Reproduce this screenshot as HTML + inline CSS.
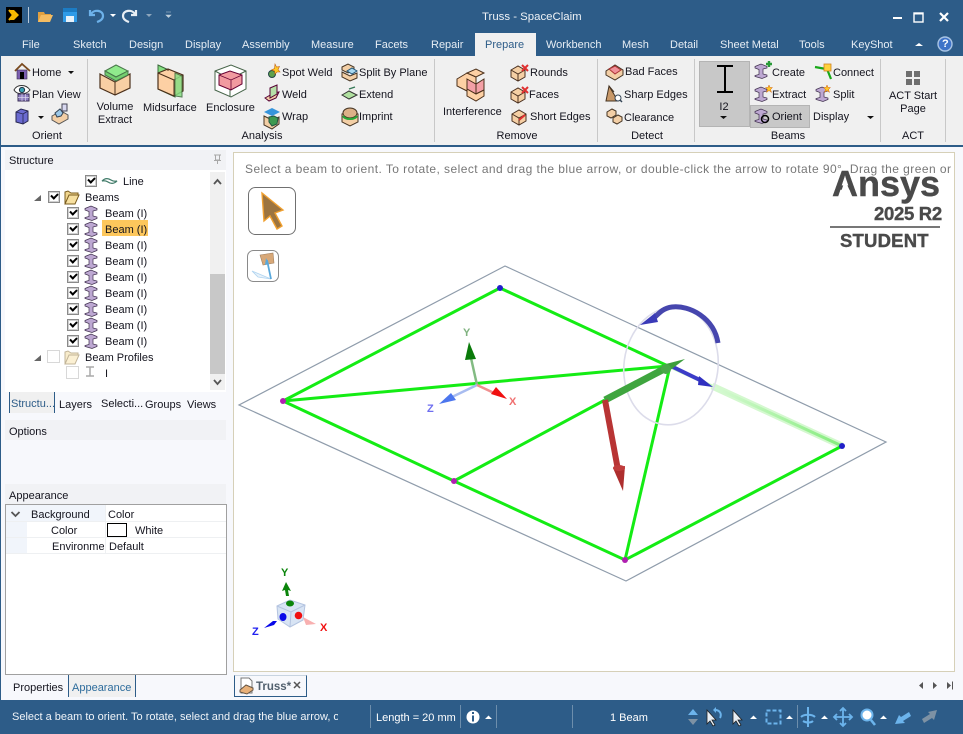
<!DOCTYPE html>
<html><head><meta charset="utf-8"><title>Truss - SpaceClaim</title>
<style>
html,body{margin:0;padding:0;width:963px;height:734px;overflow:hidden;background:#f7f8fc}
body{position:relative;font:11px "Liberation Sans",sans-serif;color:#14141e}
.a{position:absolute}
.t{position:absolute;white-space:nowrap;line-height:14px;height:14px;margin-top:1px}
.c{transform:translateX(-50%);text-align:center}
.w{color:#fff}
.tab{color:#e6edf4;top:37px}
.sep{position:absolute;top:59px;height:83px;width:1px;background:#c8c8c8}
.ck{position:absolute;width:10px;height:10px;border:1px solid #8a8a8a;background:#fff;outline:1px solid #d0d0d0;outline-offset:-2px}
.ck:after{content:"";position:absolute;left:2px;top:0.5px;width:5px;height:3px;border-left:2px solid #000;border-bottom:2px solid #000;transform:rotate(-45deg)}
.un{position:absolute;width:11px;height:11px;border:1px solid #d8d8d8;background:#fff}
.hd{position:absolute;left:5px;width:221px;height:20px;background:#f1f2f5}
.ss{position:absolute;top:705px;height:23px;width:1px;background:#6d8eac}
.lg{position:absolute;white-space:nowrap;font-weight:bold;color:#4a4a4a;-webkit-text-stroke:.4px #4a4a4a}
svg{position:absolute;overflow:visible}
</style></head><body>

<!-- title bar -->
<div class="a" style="left:0;top:0;width:963px;height:56px;background:#2d5c88"></div>
<div class="a" style="left:6px;top:7px;width:16px;height:16px;background:#000"></div>
<svg style="left:0;top:0" width="963" height="56">
<path d="M9 10h5l5 5-5 5H9l3-5z" fill="#f5b800"/><path d="M9 10l4 5-4 5" fill="none" stroke="#f5b800" stroke-width="2"/>
<rect x="28" y="7" width="1" height="16" fill="#b8c8d8"/>
<path d="M38 22V12h6l1 2h6v2h-9l-2 6z" fill="#e0a040"/><path d="M38 22l3-7h12l-3 7z" fill="#f4bc62"/>
<rect x="63" y="8" width="14" height="14" fill="#2f9be8"/><rect x="66" y="16" width="8" height="6" fill="#e8f2fa"/><rect x="63" y="8" width="14" height="4" fill="#1c7cc4"/>
<path d="M90 10v5h5M91 14c3-5 12-4 12 2 0 3-3 5-6 6" fill="none" stroke="#6db2ea" stroke-width="2.2"/>
<path d="M110 14l3 3 3-3z" fill="#fff"/>
<path d="M136 10v5h-5M135 14c-3-5-12-4-12 2 0 3 3 5 6 6" fill="none" stroke="#e8eef4" stroke-width="2.2"/>
<path d="M146 14l3 3 3-3z" fill="#8ea6bc"/>
<path d="M166 12h5M166 15l2.500 2.500 2.500-2.500z" fill="#c0d0dc" stroke="#c0d0dc" stroke-width=".6"/>
<rect x="893" y="17" width="9" height="2" fill="#fff"/>
<rect x="914" y="13" width="9" height="9" fill="none" stroke="#fff" stroke-width="1.400"/><rect x="914" y="12.500" width="9" height="2" fill="#fff"/>
<path d="M940 13l8 8M948 13l-8 8" stroke="#fff" stroke-width="2.200"/>
<path d="M915 46l4-3 4 3z" fill="#fff"/>
<circle cx="945" cy="44" r="7" fill="#3f73c8" stroke="#a8c4e4" stroke-width="1.400"/>
</svg>
<div class="t w" style="left:482px;top:9px;color:#eef2f6;font-size:11.400px">Truss - SpaceClaim</div>
<div class="t w" style="left:942px;top:36px;font-weight:bold;font-size:11px">?</div>
<div class="t tab" style="left:22px">File</div>
<div class="t tab" style="left:73px">Sketch</div>
<div class="t tab" style="left:129px">Design</div>
<div class="t tab" style="left:185px">Display</div>
<div class="t tab" style="left:242px">Assembly</div>
<div class="t tab" style="left:311px">Measure</div>
<div class="t tab" style="left:375px">Facets</div>
<div class="t tab" style="left:431px">Repair</div>
<div class="a" style="left:475px;top:33px;width:61px;height:23px;background:#f0f0f0"></div>
<div class="t" style="left:485px;top:37px;color:#2d5c88">Prepare</div>
<div class="t tab" style="left:546px">Workbench</div>
<div class="t tab" style="left:622px">Mesh</div>
<div class="t tab" style="left:670px">Detail</div>
<div class="t tab" style="left:720px">Sheet Metal</div>
<div class="t tab" style="left:799px">Tools</div>
<div class="t tab" style="left:851px">KeyShot</div>

<!-- ribbon -->
<div class="a" style="left:1px;top:56px;width:962px;height:89px;background:#f0f0f0"></div>
<div class="a" style="left:0;top:56px;width:1px;height:644px;background:#2d5c88"></div>
<div class="a" style="left:0;top:145px;width:963px;height:2px;background:#2d5c88"></div>
<div class="sep" style="left:87px"></div><div class="sep" style="left:434px"></div><div class="sep" style="left:597px"></div><div class="sep" style="left:694px"></div><div class="sep" style="left:880px"></div><div class="sep" style="left:945px"></div>

<div class="a" style="left:699px;top:61px;width:49px;height:64px;background:#c8c8c8;border:1px solid #b4b4b4"></div>
<div class="a" style="left:750px;top:105px;width:58px;height:21px;background:#c8c8c8;border:1px solid #b4b4b4"></div>

<svg style="left:0;top:56px" width="963" height="90">
<defs>
<linearGradient id="gl" x1="0" x2="1" y1="0" y2="0"><stop offset="0" stop-color="#d8fad4"/><stop offset="1" stop-color="#84ec7c"/></linearGradient>
<g id="ibeam"><path d="M0 2.500l6-2.500 6 2.500v1.500l-4 1v5l4 1v1.500l-5 2-7-2V11.500l4-1v-5L0 4z" fill="#bda8d2" stroke="#40304e" stroke-width=".7"/></g>
<g id="box"><path d="M0 4l7-4 7 4v7l-7 4-7-4z" fill="#f5cfa4" stroke="#4a3020"/><path d="M0 4l7 4 7-4M7 8v7" fill="none" stroke="#4a3020"/></g>
</defs>
<!-- Home -->
<path d="M15 15l7-7 8 7" fill="none" stroke="#7a4a1e" stroke-width="1.800"/><rect x="17" y="14" width="10" height="9" fill="#7c5fb0" stroke="#3a2a50" stroke-width=".6"/><rect x="20" y="16" width="4" height="7" fill="#000"/>
<path d="M68 15l3 3 3-3zM38 60l3 3 3-3z" fill="#111"/>
<!-- Plan view -->
<path d="M14 34c3-6 12-6 16 0-4 5-13 5-16 0z" fill="#fff" stroke="#333"/><circle cx="22" cy="34" r="2.600" fill="#3aa2b4" stroke="#234"/>
<rect x="18" y="38" width="11" height="7" fill="#8e7fc0" stroke="#3c3058"/><path d="M18 41.500h11M22 38v7M25.500 38v7" stroke="#dcd6ee" stroke-width=".7"/>
<!-- Cube -->
<path d="M16 56l5-3 7 2v10l-5 3-7-2z" fill="#6a6ad0" stroke="#26264e"/><path d="M16 56l7 2 5-3M23 58v10" fill="none" stroke="#26264e" stroke-width=".8"/>
<!-- orient 2 -->
<path d="M52 60l9-5 7 4v4l-9 5-7-4z" fill="#f3cfa6" stroke="#555"/><path d="M55 57l5-4 3 4-2 3-4 1z" fill="#9cc8e8" stroke="#345"/><rect x="62" y="48" width="5" height="7" fill="#d8d8f0" stroke="#445"/>
<!-- Volume extract -->
<path d="M100 18l15 8 15-8v14l-15 7-15-7z" fill="#f8cfa4" stroke="#4a2f1a" stroke-width="1.200"/><path d="M115 26v13" fill="none" stroke="#4a2f1a"/>
<path d="M105 15l11-6 12 6-12 6z" fill="#90ea8c" stroke="#49784a"/><path d="M105 15v4l11 6 12-6v-4l-12 6z" fill="#74cf70" stroke="#49784a"/>
<!-- Midsurface -->
<path d="M158 9l17 8v24l-17-8z" fill="#86de82" stroke="#3b6a3b"/><path d="M158 17l10-4 15 6v16l-9 5-16-7z" fill="#fdd0a4" stroke="#4a2f1a" stroke-width="1.200"/><path d="M168 13v2M158 17l16 7v16M174 24l9-5" fill="none" stroke="#4a2f1a"/><path d="M175 17l7 3v21l-7-1z" fill="#86de82" stroke="#3b6a3b" opacity=".85"/>
<!-- Enclosure -->
<path d="M215 15l16-6 15 6v18l-15 8-16-7z" fill="#fff" stroke="#47654a"/><path d="M215 15l15 8 16-8M230 23v18" fill="none" stroke="#47654a"/>
<path d="M219 19l11-4 12 4v9l-11 6-12-5z" fill="#f19aa0" stroke="#603"/>
<path d="M219 19l12 5 11-5M231 24v10" fill="none" stroke="#603" stroke-width=".8"/>
<!-- Spot weld -->
<circle cx="272" cy="18" r="3.500" fill="#5ea04c" stroke="#244"/><path d="M275 8l1.500 3 3-.5-1.500 3 2 2.500h-3l-2 2-.5-3-3-1 3-1.500z" fill="#ffc828" stroke="#c06010" stroke-width=".6"/>
<!-- Weld -->
<path d="M265 42l9-5 5-1-3 6-7 3z" fill="#f3cfa6" stroke="#503"/><path d="M270 32l7-3v9l-7 4z" fill="#b6e0a8" stroke="#503"/>
<!-- Wrap -->
<path d="M264 56l8-4 8 4-8 4z" fill="#3695dc"/><path d="M264 60l8 4 7-3v7l-7 5-8-4z" fill="#f3cfa6" stroke="#432"/><path d="M269 61l5-1 4 2-1 6-5 2-3-4z" fill="#3e9a50" stroke="#254"/>
<!-- Split by plane -->
<path d="M342 11l6-3 6 3v3l-6 3-6-3z" fill="#f3cfa6" stroke="#432"/><path d="M347 15l5-3 5 3-5 3z" fill="#a8d8f0" stroke="#257"/><path d="M342 16l8 4 7-3v5l-7 3-8-4z" fill="#f3cfa6" stroke="#432"/>
<!-- Extend -->
<path d="M342 39l7-4 8 4-8 4z" fill="#b0e0a0" stroke="#333"/><path d="M349 33l6-2" fill="none" stroke="#375" stroke-width="1.400"/>
<!-- Imprint -->
<path d="M342 58l8-3 8 3v8l-8 4-8-4z" fill="#f3cfa6" stroke="#432"/><ellipse cx="350" cy="57" rx="7" ry="5" fill="#dcb188" stroke="#432"/><path d="M343 60c2 4 12 4 14 0" fill="none" stroke="#28a838" stroke-width="2"/>
<!-- Interference -->
<path d="M457 23l10-6 9 4v9l-9 5-10-5z" fill="#fdd0a4" stroke="#4a2f1a"/><path d="M467 17l9 4 8-4-8-4-9 4z" fill="#fdd0a4" stroke="#4a2f1a"/>
<path d="M467 23l9 5 8-5v11l-8 4-9-5z" fill="#f4a0a6" stroke="#4a2f1a"/><path d="M476 28v10" stroke="#4a2f1a"/><path d="M467 33l9 5 8-4v6l-8 5-9-5z" fill="#fdd0a4" stroke="#4a2f1a"/>
<!-- Rounds / faces / short edges -->
<use href="#box" x="511" y="10"/><path d="M522 9l6 6M528 9l-6 6" stroke="#e03030" stroke-width="2"/>
<use href="#box" x="511" y="32"/><path d="M522 31l6 6M528 31l-6 6" stroke="#e03030" stroke-width="2"/>
<use href="#box" x="512" y="54"/><path d="M519 64l6-5" stroke="#e03030" stroke-width="2"/>
<!-- Bad faces -->
<path d="M606 15l9-6 8 5v5l-8 5-9-5z" fill="#f3cfa6" stroke="#432"/><path d="M609 13l6-3 6 4-6 4z" fill="#f09098" stroke="#a33"/>
<!-- Sharp edges -->
<path d="M606 45l3-15 9 15z" fill="#c89868" stroke="#432"/><path d="M609 30l5 6" stroke="#432"/><circle cx="618" cy="42" r="3" fill="#fff" stroke="#345"/><path d="M620 44l2 2" stroke="#345" stroke-width="1.500"/>
<!-- Clearance -->
<path d="M607 56l5-3 4 2v4l-5 3-4-2z" fill="#f3cfa6" stroke="#432"/><path d="M613 62l5-3 4 2v4l-5 3-4-2z" fill="#f3cfa6" stroke="#432"/>
<!-- I2 -->
<path d="M717 10h16M717 36h16" stroke="#000" stroke-width="2"/><path d="M725 10v26" stroke="#000" stroke-width="2"/>
<path d="M720 60l3.500 3 3.500-3z" fill="#111"/>
<!-- Beam icons -->
<use href="#ibeam" x="755" y="8"/><path d="M766 8h6M769 5v6" stroke="#289a38" stroke-width="2.400"/>
<use href="#ibeam" x="755" y="31"/><path d="M769 29l1 2.500 2.500 0-2 2 1 3-2.500-2-2.500 2 1-3-2-2 2.500 0z" fill="#ffc828" stroke="#d06010" stroke-width=".5"/>
<use href="#ibeam" x="755" y="53"/><circle cx="765" cy="63" r="3.500" fill="none" stroke="#000" stroke-width="1.500"/>
<path d="M815 11l11 2M827 13l4 10" stroke="#18a818" stroke-width="2.200" fill="none"/><rect x="824" y="8" width="7" height="7" fill="#ffd23c" stroke="#d08020" stroke-width=".8"/>
<use href="#ibeam" x="816" y="31"/><path d="M827 29l1 2.500 2.500 0-2 2 1 3-2.500-2-2.500 2 1-3-2-2 2.500 0z" fill="#ffc828" stroke="#d06010" stroke-width=".5"/>
<path d="M867 60l3.500 3 3.500-3z" fill="#111"/>
<!-- ACT -->
<path d="M906 15h6v6h-6zM914 15h6v6h-6zM906 23h6v6h-6zM914 23h6v6h-6z" fill="#6f6f6f"/>
</svg>

<div class="t" style="left:32px;top:65px">Home</div>
<div class="t" style="left:32px;top:87px">Plan View</div>
<div class="t c" style="left:47px;top:128px">Orient</div>
<div class="t c" style="left:115px;top:99px">Volume</div>
<div class="t c" style="left:115px;top:112px">Extract</div>
<div class="t" style="left:143px;top:100px">Midsurface</div>
<div class="t" style="left:206px;top:100px">Enclosure</div>
<div class="t" style="left:282px;top:65px">Spot Weld</div>
<div class="t" style="left:282px;top:87px">Weld</div>
<div class="t" style="left:282px;top:109px">Wrap</div>
<div class="t" style="left:359px;top:65px">Split By Plane</div>
<div class="t" style="left:359px;top:87px">Extend</div>
<div class="t" style="left:359px;top:109px">Imprint</div>
<div class="t c" style="left:262px;top:128px">Analysis</div>
<div class="t" style="left:443px;top:104px">Interference</div>
<div class="t" style="left:530px;top:65px">Rounds</div>
<div class="t" style="left:529px;top:87px">Faces</div>
<div class="t" style="left:530px;top:109px">Short Edges</div>
<div class="t c" style="left:517px;top:128px">Remove</div>
<div class="t" style="left:625px;top:64px">Bad Faces</div>
<div class="t" style="left:624px;top:87px">Sharp Edges</div>
<div class="t" style="left:624px;top:110px">Clearance</div>
<div class="t c" style="left:647px;top:128px">Detect</div>
<div class="t c" style="left:724px;top:99px">I2</div>
<div class="t" style="left:772px;top:65px">Create</div>
<div class="t" style="left:772px;top:87px">Extract</div>
<div class="t" style="left:772px;top:109px">Orient</div>
<div class="t" style="left:833px;top:65px">Connect</div>
<div class="t" style="left:833px;top:87px">Split</div>
<div class="t" style="left:813px;top:109px">Display</div>
<div class="t c" style="left:788px;top:128px">Beams</div>
<div class="t c" style="left:913px;top:88px">ACT Start</div>
<div class="t c" style="left:913px;top:101px">Page</div>
<div class="t c" style="left:913px;top:128px">ACT</div>

<!-- left panel -->
<div class="hd" style="top:150px"></div>
<div class="t" style="left:9px;top:153px">Structure</div>
<div class="a" style="left:5px;top:170px;width:221px;height:222px;background:#fff"></div>
<div class="a" style="left:210px;top:172px;width:15px;height:218px;background:#f0f0f0"></div>
<div class="a" style="left:210px;top:274px;width:15px;height:100px;background:#c8c8c8"></div>

<div class="ck" style="left:85px;top:175px"></div>
<div class="ck" style="left:48px;top:191px"></div>
<div class="ck" style="left:67px;top:207px"></div><div class="ck" style="left:67px;top:223px"></div><div class="ck" style="left:67px;top:239px"></div><div class="ck" style="left:67px;top:255px"></div><div class="ck" style="left:67px;top:271px"></div><div class="ck" style="left:67px;top:287px"></div><div class="ck" style="left:67px;top:303px"></div><div class="ck" style="left:67px;top:319px"></div><div class="ck" style="left:67px;top:335px"></div>
<div class="un" style="left:47px;top:350px"></div><div class="un" style="left:66px;top:366px"></div>
<div class="a" style="left:102px;top:220px;width:46px;height:16px;background:#fdc75c"></div>

<svg style="left:0;top:150px" width="235" height="290">
<path d="M214 34l3.500-4 3.500 4M214 230l3.500 4 3.500-4" fill="none" stroke="#555" stroke-width="1.800"/>
<path d="M34 51l7-6v6zM34 211l7-6v6z" fill="#666"/>
<path d="M102 31c3-3 6-3 9-1s6 1 6 1c-3 3-6 3-9 1s-6-1-6-1z" fill="none" stroke="#3f7a68" stroke-width="1.200"/>
<path d="M65 54V42l3-1 3 2h7v3" fill="#f1d68e" stroke="#7a5c1e"/><path d="M65 54l4-9h10l-4 9z" fill="#f7e0a0" stroke="#7a5c1e"/>
<g opacity=".45"><path d="M65 214v-12l3-1 3 2h7v3" fill="#f1d68e" stroke="#7a5c1e"/><path d="M65 214l4-9h10l-4 9z" fill="#f7e0a0" stroke="#7a5c1e"/></g>
<use href="#ibeam" x="85" y="56"/><use href="#ibeam" x="85" y="72"/><use href="#ibeam" x="85" y="88"/><use href="#ibeam" x="85" y="104"/><use href="#ibeam" x="85" y="120"/><use href="#ibeam" x="85" y="136"/><use href="#ibeam" x="85" y="152"/><use href="#ibeam" x="85" y="168"/><use href="#ibeam" x="85" y="184"/>
<path d="M86 217h8M86 226h8M90 217v9" stroke="#aaa" stroke-width="1.500"/>
<path d="M214 5h7M215.500 5v5h4V5M217.500 10v4M214 10.500h7" fill="none" stroke="#a8a8a8"/>
<path d="M214 275h7M215.500 275v5h4v-5M217.500 280v4M214 280.500h7" fill="none" stroke="#a8a8a8"/>
<path d="M214 340h7M215.500 340v5h4v-5M217.500 345v4M214 345.500h7" fill="none" stroke="#a8a8a8"/>
</svg>

<div class="t" style="left:123px;top:174px">Line</div>
<div class="t" style="left:85px;top:190px">Beams</div>
<div class="t" style="left:105px;top:206px">Beam (I)</div>
<div class="t" style="left:105px;top:222px">Beam (I)</div>
<div class="t" style="left:105px;top:238px">Beam (I)</div>
<div class="t" style="left:105px;top:254px">Beam (I)</div>
<div class="t" style="left:105px;top:270px">Beam (I)</div>
<div class="t" style="left:105px;top:286px">Beam (I)</div>
<div class="t" style="left:105px;top:302px">Beam (I)</div>
<div class="t" style="left:105px;top:318px">Beam (I)</div>
<div class="t" style="left:105px;top:334px">Beam (I)</div>
<div class="t" style="left:85px;top:350px">Beam Profiles</div>
<div class="t" style="left:105px;top:366px">I</div>

<div class="a" style="left:9px;top:392px;width:44px;height:21px;background:#f0f0f0;border-left:1px solid #2d5c88;border-right:1px solid #2d5c88"></div>
<div class="t" style="left:11px;top:396px;color:#2d5c88">Structu...</div>
<div class="t" style="left:59px;top:397px">Layers</div>
<div class="t" style="left:101px;top:396px">Selecti...</div>
<div class="t" style="left:145px;top:397px">Groups</div>
<div class="t" style="left:187px;top:397px">Views</div>

<div class="hd" style="top:420px"></div>
<div class="t" style="left:9px;top:424px">Options</div>
<div class="hd" style="top:484px"></div>
<div class="t" style="left:9px;top:488px">Appearance</div>

<div class="a" style="left:5px;top:504px;width:220px;height:169px;background:#fff;border:1px solid #a0a0a0"></div>
<div class="a" style="left:6px;top:505px;width:21px;height:48px;background:#f1f5fb"></div>
<div class="a" style="left:27px;top:505px;width:78px;height:16px;background:#f1f5fb"></div>
<div class="a" style="left:6px;top:521px;width:220px;height:1px;background:#eef0f2"></div>
<div class="a" style="left:6px;top:537px;width:220px;height:1px;background:#eef0f2"></div>
<div class="a" style="left:6px;top:553px;width:220px;height:1px;background:#eef0f2"></div>
<div class="a" style="left:105px;top:505px;width:1px;height:48px;background:#eef0f2"></div>
<svg style="left:0;top:500px" width="40" height="30"><path d="M11.500 12l4 4 4-4" fill="none" stroke="#555" stroke-width="1.800"/></svg>
<div class="t" style="left:31px;top:507px">Background</div>
<div class="t" style="left:108px;top:507px">Color</div>
<div class="t" style="left:51px;top:523px">Color</div>
<div class="a" style="left:107px;top:523px;width:18px;height:12px;background:#fff;border:1px solid #000"></div>
<div class="t" style="left:135px;top:523px">White</div>
<div class="a" style="left:52px;top:540px;width:52px;height:13px;overflow:hidden;white-space:nowrap;line-height:14px">Environment</div>
<div class="t" style="left:109px;top:539px">Default</div>

<div class="t" style="left:13px;top:680px">Properties</div>
<div class="a" style="left:68px;top:675px;width:66px;height:22px;background:#f0f0f0;border-left:1px solid #2d5c88;border-right:1px solid #2d5c88"></div>
<div class="t" style="left:72px;top:680px;color:#2d6c9c">Appearance</div>

<!-- viewport -->
<div class="a" style="left:233px;top:152px;width:720px;height:518px;background:#fff;border:1px solid #d6d0b8"></div>
<div class="a" style="left:245px;top:162px;width:706px;height:15px;overflow:hidden;white-space:nowrap;line-height:15px;color:#777;letter-spacing:.44px;font-size:12px">Select a beam to orient. To rotate, select and drag the blue arrow, or double-click the arrow to rotate 90°. Drag the green or</div>

<svg style="left:0;top:0" width="963" height="734">
<path d="M505 266L886 442L626 581L239 405Z" fill="none" stroke="#8f9cab" stroke-width="1.200"/>
<path d="M712 386L842 446" stroke="#b8f4b0" stroke-width="7" opacity=".6"/>
<g fill="none" stroke="#14ec14" stroke-width="3">
<path d="M500 288L668 366"/><path d="M283 401L500 288"/><path d="M283 401L454 481L625 560L842 446"/><path d="M283 401L668 366"/><path d="M454 481L605 400"/><path d="M625 560L670 366"/>
</g>
<path d="M668 366L712 386" stroke="#c4f8bc" stroke-width="3"/>
<path d="M712 386L842 446" stroke="url(#gl)" stroke-width="3"/>
<ellipse cx="671" cy="366" rx="47" ry="59" fill="none" stroke="#dcdcea" stroke-width="1.600" transform="rotate(8 671 366)"/>
<path d="M718 343C714 318 690 305 672 307C664 308 660 312 655 317" fill="none" stroke="#4646ae" stroke-width="5"/>
<path d="M640 325L655 313L658 322Z" fill="#3a3ab8"/>
<path d="M673 367L702 381" stroke="#3c3cc8" stroke-width="4"/><path d="M713 387L699 376L698 385Z" fill="#3030c0"/>
<path d="M605 400L668 367" stroke="#3fa53f" stroke-width="7"/><path d="M685 359L662 365L665 374Z" fill="#3c9e3c"/><circle cx="666" cy="369" r="5" fill="#48a848"/>
<path d="M605 400L618 470" stroke="#b83434" stroke-width="6"/><path d="M623 491L613 468L625 466Z" fill="#ae2e2e"/><ellipse cx="619" cy="468" rx="6" ry="3" fill="#c03c3c"/>
<circle cx="500" cy="288" r="3" fill="#2020c8"/><circle cx="842" cy="446" r="3" fill="#2020c8"/>
<circle cx="283" cy="401" r="3" fill="#b020b0"/><circle cx="454" cy="481" r="3" fill="#b020b0"/><circle cx="625" cy="560" r="3" fill="#b020b0"/>
<!-- triad -->
<path d="M477 385L471 358" stroke="#83bb83" stroke-width="2.500"/><path d="M469 342L465 360L476 359Z" fill="#0a7a0a"/>
<path d="M477 385L452 397" stroke="#a8bcf0" stroke-width="2.500"/><path d="M439 404L451 393L456 400Z" fill="#4c76ee"/>
<path d="M477 385L494 393" stroke="#f09090" stroke-width="2.500"/><path d="M507 399L491 394L496 387Z" fill="#f01010"/>
<!-- cursor button -->
<rect x="248.500" y="187.500" width="47" height="47" rx="7" fill="#fff" stroke="#707070"/>
<path d="M262 193L283 210L275 213L282 226L277 229L270 216L264 221Z" fill="#9c7440" stroke="#f0a030" stroke-width="1.400"/>
<rect x="247.500" y="250.500" width="31" height="31" rx="6" fill="#fff" stroke="#8a8a8a"/>
<path d="M260 255L273 253L274 263L263 265Z" fill="#d8a878" stroke="#a08060" stroke-width=".6"/>
<path d="M252 271L271 279L258 277Z" fill="#e8f2fa" stroke="#b0d4f0" stroke-width=".8"/>
<path d="M267 260L271 279" stroke="#58a8dc" stroke-width="1.800"/><path d="M266 258l-1 7 4-1z" fill="#58a8dc"/>
<!-- mini triad -->
<path d="M277 606l13-6 15 5-2 15-13 7-12-8z" fill="#d8e4f4" stroke="#b4c4e0"/><path d="M277 606l14 6 14-7M291 612l-1 15" fill="none" stroke="#b4c4e0"/>
<ellipse cx="290" cy="603.500" rx="4" ry="3" fill="#0a840a"/><ellipse cx="283" cy="617" rx="3.500" ry="4" fill="#0808e8"/><circle cx="298.500" cy="615.500" r="3.800" fill="#f01010"/>
<path d="M286 582L282 591L285 590L286 596L289 596L288 590L291 591Z" fill="#0a840a"/>
<path d="M264 628L273 621L277 621L274 625Z" fill="#0808e8"/>
<path d="M303 617L316 624L306 625Z" fill="#f8b0b0"/>
</svg>
<div class="t" style="left:463px;top:325px;color:#7fb27f;font-weight:bold;font-size:11px">Y</div>
<div class="t" style="left:427px;top:401px;color:#6e6ef0;font-weight:bold;font-size:11px">Z</div>
<div class="t" style="left:509px;top:394px;color:#f07070;font-weight:bold;font-size:11px">X</div>
<div class="t" style="left:281px;top:565px;color:#0a840a;font-weight:bold;font-size:11px">Y</div>
<div class="t" style="left:252px;top:624px;color:#2020f0;font-weight:bold;font-size:11px">Z</div>
<div class="t" style="left:320px;top:620px;color:#f01010;font-weight:bold;font-size:11px">X</div>

<!-- logo -->
<div class="lg" style="left:832px;top:164px;height:40px;line-height:40px;font-size:36px">Ansys</div>
<svg style="left:0;top:0" width="963" height="734"><path d="M845 180L839 198L853 198Z" fill="#fff"/></svg>
<div class="lg" style="left:874px;top:205px;height:18px;line-height:18px;font-size:18.500px;letter-spacing:-.3px">2025 R2</div>
<div class="a" style="left:830px;top:226px;width:110px;height:2px;background:#777"></div>
<div class="lg" style="left:840px;top:232px;height:18px;line-height:18px;font-size:18.500px;letter-spacing:.2px">STUDENT</div>

<!-- doc tab -->
<div class="a" style="left:234px;top:675px;width:71px;height:20px;background:#f7f8fc;border:1px solid #2d5c88;border-top:1px solid #c8d4e0"></div>
<svg style="left:0;top:670px" width="963" height="30">
<path d="M241 8h8l3 3v12h-11z" fill="#fff" stroke="#777"/><path d="M240 20l6-5 7 3v2l-6 4-7-2z" fill="#e8b078" stroke="#654"/>
<path d="M294 12l6 6M300 12l-6 6" stroke="#555" stroke-width="1.500"/>
<path d="M923 12l-4 3.500 4 3.500zM933 12l4 3.500-4 3.500zM947 12l4 3.500-4 3.500z" fill="#555"/><rect x="952" y="11.500" width="1" height="8" fill="#555"/>
</svg>
<div class="t" style="left:256px;top:679px;font-weight:bold;color:#52606e;font-size:11.500px">Truss*</div>

<!-- status bar -->
<div class="a" style="left:0;top:700px;width:963px;height:34px;background:#2d5c88"></div>
<div class="a w" style="left:12px;top:710px;width:326px;height:15px;overflow:hidden;white-space:nowrap;line-height:15px;color:#f0f4f8">Select a beam to orient. To rotate, select and drag the blue arrow, or double-click</div>
<div class="ss" style="left:370px"></div><div class="ss" style="left:460px"></div><div class="ss" style="left:496px"></div><div class="ss" style="left:572px"></div><div class="ss" style="left:797px"></div>
<div class="t w" style="left:376px;top:710px">Length = 20 mm</div>
<div class="t w" style="left:610px;top:710px">1 Beam</div>
<svg style="left:0;top:700px" width="963" height="34">
<circle cx="473" cy="17" r="6.500" fill="#fff"/><rect x="472" y="15.500" width="2" height="6" fill="#2d5c88"/><rect x="472" y="12" width="2" height="2" fill="#2d5c88"/>
<path d="M485 19l3.500-3.500 3.500 3.500zM750 19l3.500-3.500 3.500 3.500zM786 19l3.500-3.500 3.500 3.500zM821 19l3.500-3.500 3.500 3.500zM880 19l3.500-3.500 3.500 3.500z" fill="#fff"/>
<path d="M688 15l5-6 5 6z" fill="#6cb4ec"/><path d="M688 19l5 6 5-6z" fill="#7e92a4"/>
<path d="M707 10v14l3-3 3 5 2-1-3-5h4z" fill="#e8eef4" stroke="#222" stroke-width=".8"/><path d="M715 10c5 0 7 4 5 8" fill="none" stroke="#6cb4ec" stroke-width="2"/><path d="M713 10l3-3v6z" fill="#6cb4ec"/>
<path d="M733 10v14l3-3 3 5 2-1-3-5h4z" fill="#e8eef4" stroke="#222" stroke-width=".8"/>
<rect x="766.500" y="10.500" width="14" height="13" fill="none" stroke="#6cb4ec" stroke-width="2" stroke-dasharray="4 2"/>
<path d="M808 7v20M801 17c3-3 11-3 14 0M803 21c3 2 8 2 10 0" fill="none" stroke="#6cb4ec" stroke-width="2"/>
<path d="M843 8v18M834 17h18M840 11l3-3 3 3M840 23l3 3 3-3M837 14l-3 3 3 3M849 14l3 3-3 3" fill="none" stroke="#6cb4ec" stroke-width="1.800"/>
<circle cx="867" cy="15" r="5.500" fill="#fff" stroke="#6cb4ec" stroke-width="2"/><path d="M871 20l4 5" stroke="#6cb4ec" stroke-width="2.600"/>
<path d="M895 24l4-9 2 2 8-5 2 4-8 5 2 2z" fill="#6cb4ec"/>
<path d="M937 10l-9 2 2 2-8 5 2 4 8-5 2 2z" fill="#7e92a4"/>
</svg>
</body></html>
